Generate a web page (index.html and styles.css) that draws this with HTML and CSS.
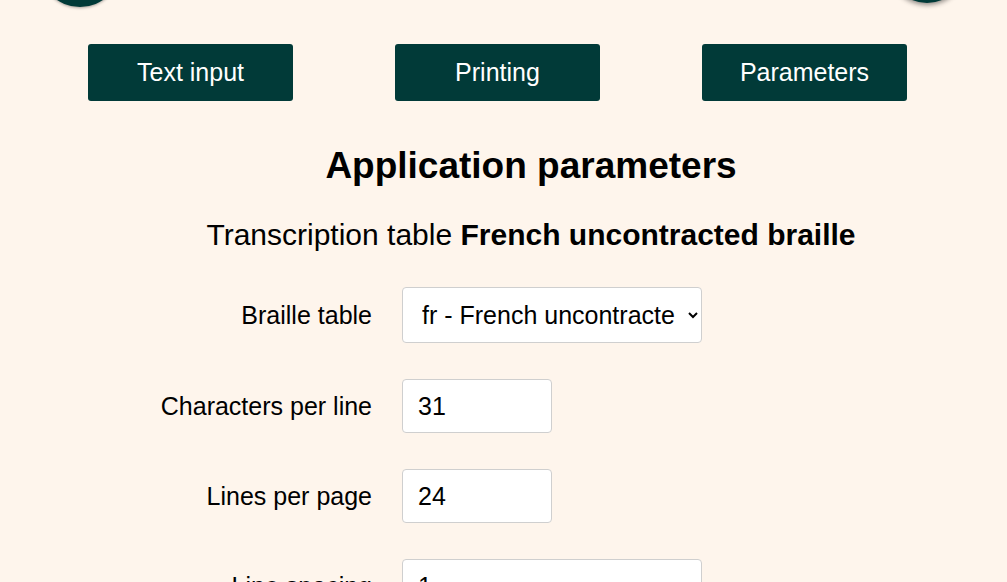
FILE: index.html
```html
<!DOCTYPE html>
<html lang="en">
<head>
<meta charset="utf-8">
<title>Application parameters</title>
<link rel="stylesheet" href="styles.css">
</head>
<body>
<header class="top">
  <div class="logo"></div>
  <div class="toggle"></div>
</header>
<nav class="tabs">
  <button class="tab">Text input</button>
  <button class="tab">Printing</button>
  <button class="tab">Parameters</button>
</nav>
<main class="main">
  <h1 class="title">Application parameters</h1>
  <p class="subtitle">Transcription table <b>French uncontracted braille</b></p>
  <form class="form">
    <label class="label" for="tbl">Braille table</label>
    <select class="field select" id="tbl">
      <option>fr - French uncontracted braille</option>
    </select>
    <label class="label" for="cpl">Characters per line</label>
    <input class="field short" id="cpl" type="text" value="31">
    <label class="label" for="lpp">Lines per page</label>
    <input class="field short" id="lpp" type="text" value="24">
    <label class="label" for="ls">Line spacing</label>
    <input class="field long" id="ls" type="text" value="1">
  </form>
</main>
</body>
</html>
```

FILE: styles.css
```css
html, body {
  margin: 0;
  padding: 0;
}
body {
  background: #fef5ec;
  font-family: "Liberation Sans", Arial, sans-serif;
  font-size: 25px;
  color: #000;
  overflow: hidden;
}
.top {
  display: flex;
  justify-content: space-between;
  align-items: flex-start;
  height: 82px;
  margin-top: -75px;
  padding: 0 41px 0 39px;
}
.logo {
  width: 82px;
  height: 82px;
  border-radius: 50%;
  background: #003a38;
  box-shadow: 0 1px 3px rgba(0, 0, 0, 0.35);
}
.toggle {
  width: 78px;
  height: 78px;
  border-radius: 50%;
  background: #003a38;
  box-shadow: 0 2px 5px rgba(0, 0, 0, 0.45);
}
.tabs {
  display: flex;
  gap: 102px;
  padding-left: 88px;
  margin-top: 37px;
}
.tab {
  width: 205px;
  height: 57px;
  border: none;
  border-radius: 3px;
  background: #013a38;
  color: #fff;
  font-family: "Liberation Sans", Arial, sans-serif;
  font-size: 25px;
  padding: 0;
}
.main {
  padding-left: 55px;
  text-align: center;
}
.title {
  font-size: 37px;
  line-height: 44px;
  font-weight: bold;
  margin: 43px 0 0 0;
}
.subtitle {
  font-size: 30px;
  line-height: 36px;
  margin: 29px 0 0 0;
}
.form {
  display: grid;
  grid-template-columns: 232px auto;
  column-gap: 30px;
  row-gap: 36px;
  align-items: center;
  justify-items: start;
  margin: 34px 0 0 85px;
  text-align: left;
}
.label {
  justify-self: end;
  text-align: right;
  font-size: 25px;
}
.field {
  box-sizing: border-box;
  font-family: "Liberation Sans", Arial, sans-serif;
  font-size: 25px;
  color: #000;
  background: #fff;
  border: 1px solid #cfcfcf;
  border-radius: 4px;
  height: 54px;
  padding: 0 15px;
}
.select {
  width: 300px;
  height: 56px;
  padding: 0 10px 0 15px;
}
.short {
  width: 150px;
}
.long {
  width: 300px;
}
```
